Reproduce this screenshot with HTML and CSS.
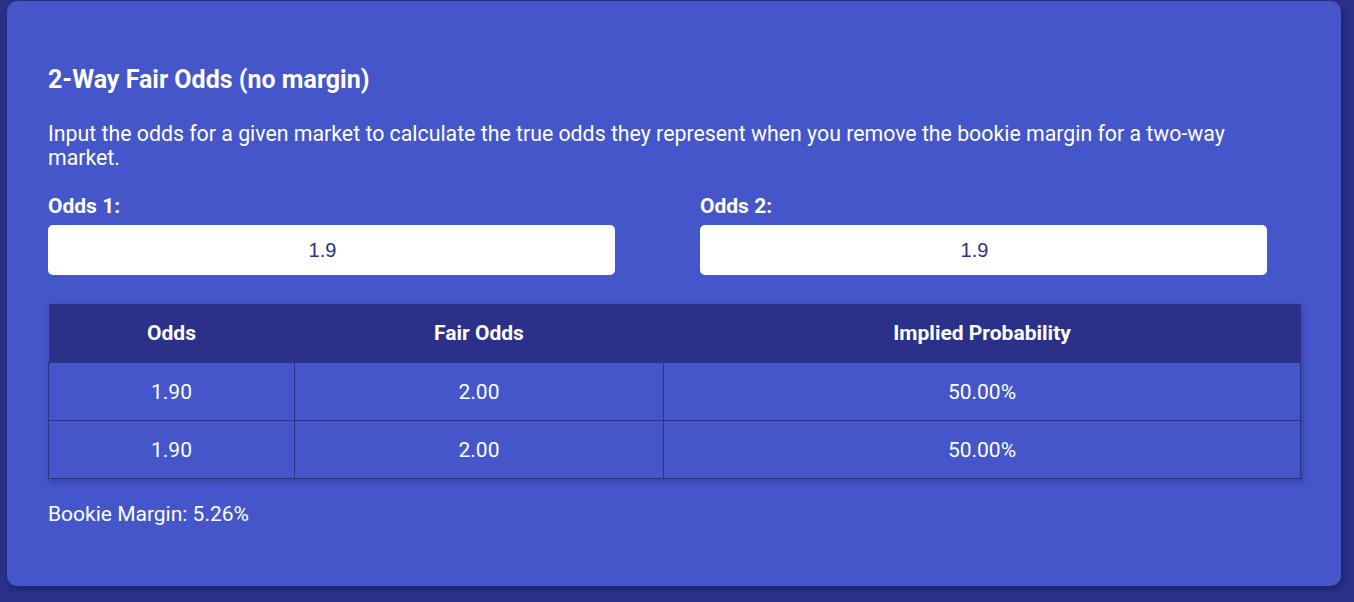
FILE: index.html
```html
<!DOCTYPE html>
<html>
<head>
<meta charset="utf-8">
<link rel="stylesheet" href="styles.css">
</head>
<body>
<div class="card">
  <h2 class="title">2-Way Fair Odds (no margin)</h2>
  <p class="desc">Input the odds for a given market to calculate the true odds they represent when you remove the bookie margin for a two-way market.</p>
  <div class="inputs">
    <div class="field">
      <label class="label">Odds 1:</label>
      <input class="box" type="text" value="1.9">
    </div>
    <div class="field">
      <label class="label">Odds 2:</label>
      <input class="box" type="text" value="1.9">
    </div>
  </div>
  <table class="tbl">
    <thead>
      <tr><th class="c1">Odds</th><th class="c2">Fair Odds</th><th>Implied Probability</th></tr>
    </thead>
    <tbody>
      <tr><td>1.90</td><td>2.00</td><td>50.00%</td></tr>
      <tr><td>1.90</td><td>2.00</td><td>50.00%</td></tr>
    </tbody>
  </table>
  <p class="margin">Bookie Margin: 5.26%</p>
</div>
</body>
</html>
```
FILE: styles.css
```css
html, body {
  margin: 0;
  padding: 0;
  background: #2b3089;
  height: 100%;
}
body {
  font-family: Roboto, "Liberation Sans", sans-serif;
  color: #ffffff;
  overflow: hidden;
}
.card {
  box-sizing: border-box;
  margin: 1px 0 0 7px;
  width: 1334px;
  height: 585px;
  background: #4456c9;
  border-radius: 10px;
  padding: 64px 41px 0 41px;
  box-shadow: 2px 3px 6px rgba(20, 20, 80, 0.5);
}
.title {
  margin: 0;
  font-size: 25px;
  font-weight: 700;
  line-height: 30px;
}
.desc {
  margin: 27px 0 0 0;
  font-size: 21.3px;
  line-height: 24px;
  width: 1200px;
}
.inputs {
  display: grid;
  grid-template-columns: 567px 567px;
  column-gap: 85px;
  margin-top: 24px;
}
.field {
  display: flex;
  flex-direction: column;
}
.label {
  font-size: 21px;
  font-weight: 700;
  line-height: 24px;
}
.box {
  margin-top: 7px;
  box-sizing: border-box;
  height: 50px;
  width: 567px;
  border: none;
  border-radius: 5px;
  background: #ffffff;
  text-align: center;
  font-family: "Liberation Sans", Arial, sans-serif;
  font-size: 20px;
  color: #2b3089;
  outline: none;
  padding: 0 18px 0 0;
}
.tbl {
  margin-top: 29px;
  width: 1253px;
  border-collapse: collapse;
  box-shadow: 2px 3px 6px rgba(30, 30, 100, 0.35);
  font-size: 21px;
}
.tbl th {
  background: #2b3089;
  height: 58px;
  font-weight: 700;
  font-size: 21px;
  padding: 0;
  text-align: center;
}
.tbl .c1 { width: 246px; }
.tbl .c2 { width: 369px; }
.tbl td {
  height: 57px;
  padding: 0;
  text-align: center;
  border: 1px solid #2b3089;
}
.margin {
  margin: 23px 0 0 0;
  font-size: 21px;
  line-height: 24px;
}
```
